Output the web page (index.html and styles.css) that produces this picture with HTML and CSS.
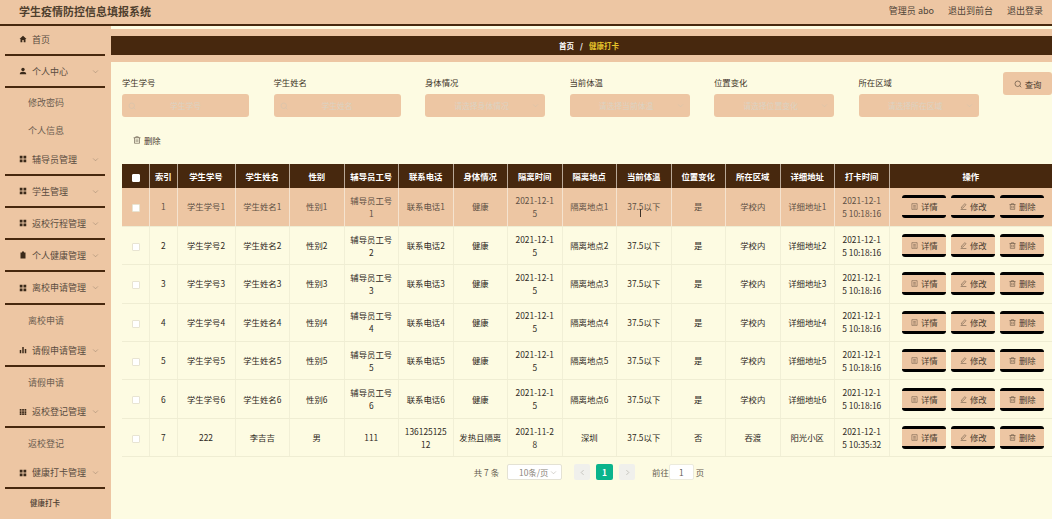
FILE: index.html
```html
<!DOCTYPE html>
<html lang="zh-CN">
<head>
<meta charset="utf-8">
<title>学生疫情防控信息填报系统</title>
<link rel="stylesheet" href="styles.css">
</head>
<body>
<svg class="defs" width="0" height="0">
  <symbol id="i-home" viewBox="0 0 16 16"><path d="M8 1.500 1 8h2v6.500h3.600V10h2.800v4.500H13V8h2z" fill="currentColor"/></symbol>
  <symbol id="i-user" viewBox="0 0 16 16"><circle cx="8" cy="5" r="3.400" fill="currentColor"/><path d="M1.500 14.500c0-3.600 2.800-5 6.500-5s6.500 1.400 6.500 5z" fill="currentColor"/></symbol>
  <symbol id="i-grid" viewBox="0 0 16 16"><path d="M1.500 1.500h5.500v5.500H1.500zM9 1.500h5.500v5.500H9zM1.500 9h5.500v5.500H1.500zM9 9h5.500v5.500H9z" fill="currentColor"/></symbol>
  <symbol id="i-grid9" viewBox="0 0 16 16"><path d="M1.500 2h3.500v3.500H1.500zM6.300 2h3.500v3.500H6.300zM11 2h3.500v3.500H11zM1.500 6.300h3.500v3.500H1.500zM6.300 6.300h3.500v3.500H6.300zM11 6.300h3.500v3.500H11zM1.500 10.600h3.500v3.500H1.500zM6.300 10.600h3.500v3.500H6.300zM11 10.600h3.500v3.500H11z" fill="currentColor"/></symbol>
  <symbol id="i-bars" viewBox="0 0 16 16"><path d="M1.500 8h3v6.500h-3zM6.500 2h3v12.500h-3zM11.500 6h3v8.500h-3z" fill="currentColor"/></symbol>
  <symbol id="i-health" viewBox="0 0 16 16"><path d="M6 1h4v2h3v12H3V3h3z" fill="currentColor"/></symbol>
  <symbol id="i-doc" viewBox="0 0 16 16"><path d="M2 1.500h12v13H2zM5 5.500h6M5 8.500h6M5 11.500h6" fill="none" stroke="currentColor" stroke-width="1"/></symbol>
  <symbol id="i-search" viewBox="0 0 16 16"><circle cx="7.500" cy="7.500" r="5.500" fill="none" stroke="currentColor" stroke-width="1.200"/><path d="m11.500 11.500 3 3" stroke="currentColor" stroke-width="1.200"/></symbol>
  <symbol id="i-down" viewBox="0 0 16 16"><path d="m2.500 5.500 5.500 5.500 5.500-5.500" fill="none" stroke="currentColor" stroke-width="1.300"/></symbol>
  <symbol id="i-trash" viewBox="0 0 16 16"><path d="M1 3.500h14M5.500 3.500v-2h5v2M3 3.500v11h10v-11M6.300 6.500v5.500M9.700 6.500v5.500" fill="none" stroke="currentColor" stroke-width="1.100"/></symbol>
  <symbol id="i-edit" viewBox="0 0 16 16"><path d="M11 1.500 13.500 4 6 12H3.500v-2.500zM1.500 15h13" fill="none" stroke="currentColor" stroke-width="1.100"/></symbol>
  <symbol id="i-left" viewBox="0 0 16 16"><path d="m10.500 2.500-5.500 5.500 5.500 5.500" fill="none" stroke="currentColor" stroke-width="1.500"/></symbol>
  <symbol id="i-right" viewBox="0 0 16 16"><path d="m5.500 2.500 5.500 5.500-5.500 5.500" fill="none" stroke="currentColor" stroke-width="1.500"/></symbol>
</svg>

<header class="topbar">
  <h1 class="brand">学生疫情防控信息填报系统</h1>
  <nav class="top-links">
    <span>管理员 abo</span>
    <span>退出到前台</span>
    <span>退出登录</span>
  </nav>
</header>

<div class="shell">
  <aside class="sidebar">
    <div class="menu-item menu-first"><svg class="mi"><use href="#i-home"/></svg><span class="mt">首页</span></div>
    <div class="menu-item"><svg class="mi"><use href="#i-user"/></svg><span class="mt">个人中心</span><svg class="chev"><use href="#i-down"/></svg></div>
    <div class="sub-item sub-short">修改密码</div>
    <div class="sub-item sub-short">个人信息</div>
    <div class="menu-item"><svg class="mi"><use href="#i-grid"/></svg><span class="mt">辅导员管理</span><svg class="chev"><use href="#i-down"/></svg></div>
    <div class="menu-item"><svg class="mi"><use href="#i-grid"/></svg><span class="mt">学生管理</span><svg class="chev"><use href="#i-down"/></svg></div>
    <div class="menu-item"><svg class="mi"><use href="#i-grid"/></svg><span class="mt">返校行程管理</span><svg class="chev"><use href="#i-down"/></svg></div>
    <div class="menu-item"><svg class="mi"><use href="#i-health"/></svg><span class="mt">个人健康管理</span><svg class="chev"><use href="#i-down"/></svg></div>
    <div class="menu-item menu-tall"><svg class="mi"><use href="#i-grid"/></svg><span class="mt">离校申请管理</span><svg class="chev"><use href="#i-down"/></svg></div>
    <div class="sub-item">离校申请</div>
    <div class="menu-item"><svg class="mi"><use href="#i-bars"/></svg><span class="mt">请假申请管理</span><svg class="chev"><use href="#i-down"/></svg></div>
    <div class="sub-item">请假申请</div>
    <div class="menu-item menu-short"><svg class="mi"><use href="#i-grid9"/></svg><span class="mt">返校登记管理</span><svg class="chev"><use href="#i-down"/></svg></div>
    <div class="sub-item">返校登记</div>
    <div class="menu-item menu-short"><svg class="mi"><use href="#i-grid"/></svg><span class="mt">健康打卡管理</span><svg class="chev"><use href="#i-down"/></svg></div>
    <div class="sub-item sub-active">健康打卡</div>
  </aside>

  <main class="content">
    <div class="crumb-band">
      <div class="crumbs"><span>首页</span><span class="crumb-sep">/</span><span class="crumb-now">健康打卡</span></div>
    </div>

    <form class="filters">
      <div class="field field-wide">
        <label class="field-label">学生学号</label>
        <div class="control"><svg class="ctl-search"><use href="#i-search"/></svg><span class="ph ph-input">学生学号</span></div>
      </div>
      <div class="field field-wide">
        <label class="field-label">学生姓名</label>
        <div class="control"><svg class="ctl-search"><use href="#i-search"/></svg><span class="ph ph-input">学生姓名</span></div>
      </div>
      <div class="field field-sel">
        <label class="field-label">身体情况</label>
        <div class="control"><span class="ph">请选择身体情况</span><svg class="ctl-down"><use href="#i-down"/></svg></div>
      </div>
      <div class="field field-sel">
        <label class="field-label">当前体温</label>
        <div class="control"><span class="ph">请选择当前体温</span><svg class="ctl-down"><use href="#i-down"/></svg></div>
      </div>
      <div class="field field-sel">
        <label class="field-label">位置变化</label>
        <div class="control"><span class="ph">请选择位置变化</span><svg class="ctl-down"><use href="#i-down"/></svg></div>
      </div>
      <div class="field field-sel">
        <label class="field-label">所在区域</label>
        <div class="control"><span class="ph">请选择所在区域</span><svg class="ctl-down"><use href="#i-down"/></svg></div>
      </div>
      <button type="button" class="query-btn"><svg class="btn-ic"><use href="#i-search"/></svg>查询</button>
    </form>

    <div class="toolbar">
      <button type="button" class="del-btn"><svg class="btn-ic"><use href="#i-trash"/></svg>删除</button>
    </div>

    <table class="grid">
      <colgroup>
        <col class="c-check"><col class="c-index"><col class="c-id"><col class="c-std"><col class="c-std"><col class="c-std"><col class="c-std"><col class="c-std"><col class="c-std"><col class="c-std"><col class="c-std"><col class="c-std"><col class="c-std"><col class="c-std"><col class="c-std"><col class="c-ops">
      </colgroup>
      <thead>
        <tr>
          <th><span class="check check-head"></span></th><th>索引</th><th>学生学号</th><th>学生姓名</th><th>性别</th><th>辅导员工号</th><th>联系电话</th><th>身体情况</th><th>隔离时间</th><th>隔离地点</th><th>当前体温</th><th>位置变化</th><th>所在区域</th><th>详细地址</th><th>打卡时间</th><th>操作</th>
        </tr>
      </thead>
      <tbody>
        <tr class="row-hover">
          <td><span class="check"></span></td><td>1</td><td>学生学号1</td><td>学生姓名1</td><td>性别1</td><td>辅导员工号1</td><td>联系电话1</td><td>健康</td><td>2021-12-15</td><td>隔离地点1</td><td class="cursor-cell">37.5以下<span class="ibeam"></span></td><td>是</td><td>学校内</td><td>详细地址1</td><td>2021-12-15 10:18:16</td>
          <td><div class="ops"><button type="button" class="op"><svg class="op-ic"><use href="#i-doc"/></svg>详情</button><button type="button" class="op"><svg class="op-ic"><use href="#i-edit"/></svg>修改</button><button type="button" class="op"><svg class="op-ic"><use href="#i-trash"/></svg>删除</button></div></td>
        </tr>
        <tr>
          <td><span class="check"></span></td><td>2</td><td>学生学号2</td><td>学生姓名2</td><td>性别2</td><td>辅导员工号2</td><td>联系电话2</td><td>健康</td><td>2021-12-15</td><td>隔离地点2</td><td>37.5以下</td><td>是</td><td>学校内</td><td>详细地址2</td><td>2021-12-15 10:18:16</td>
          <td><div class="ops"><button type="button" class="op"><svg class="op-ic"><use href="#i-doc"/></svg>详情</button><button type="button" class="op"><svg class="op-ic"><use href="#i-edit"/></svg>修改</button><button type="button" class="op"><svg class="op-ic"><use href="#i-trash"/></svg>删除</button></div></td>
        </tr>
        <tr>
          <td><span class="check"></span></td><td>3</td><td>学生学号3</td><td>学生姓名3</td><td>性别3</td><td>辅导员工号3</td><td>联系电话3</td><td>健康</td><td>2021-12-15</td><td>隔离地点3</td><td>37.5以下</td><td>是</td><td>学校内</td><td>详细地址3</td><td>2021-12-15 10:18:16</td>
          <td><div class="ops"><button type="button" class="op"><svg class="op-ic"><use href="#i-doc"/></svg>详情</button><button type="button" class="op"><svg class="op-ic"><use href="#i-edit"/></svg>修改</button><button type="button" class="op"><svg class="op-ic"><use href="#i-trash"/></svg>删除</button></div></td>
        </tr>
        <tr>
          <td><span class="check"></span></td><td>4</td><td>学生学号4</td><td>学生姓名4</td><td>性别4</td><td>辅导员工号4</td><td>联系电话4</td><td>健康</td><td>2021-12-15</td><td>隔离地点4</td><td>37.5以下</td><td>是</td><td>学校内</td><td>详细地址4</td><td>2021-12-15 10:18:16</td>
          <td><div class="ops"><button type="button" class="op"><svg class="op-ic"><use href="#i-doc"/></svg>详情</button><button type="button" class="op"><svg class="op-ic"><use href="#i-edit"/></svg>修改</button><button type="button" class="op"><svg class="op-ic"><use href="#i-trash"/></svg>删除</button></div></td>
        </tr>
        <tr>
          <td><span class="check"></span></td><td>5</td><td>学生学号5</td><td>学生姓名5</td><td>性别5</td><td>辅导员工号5</td><td>联系电话5</td><td>健康</td><td>2021-12-15</td><td>隔离地点5</td><td>37.5以下</td><td>是</td><td>学校内</td><td>详细地址5</td><td>2021-12-15 10:18:16</td>
          <td><div class="ops"><button type="button" class="op"><svg class="op-ic"><use href="#i-doc"/></svg>详情</button><button type="button" class="op"><svg class="op-ic"><use href="#i-edit"/></svg>修改</button><button type="button" class="op"><svg class="op-ic"><use href="#i-trash"/></svg>删除</button></div></td>
        </tr>
        <tr>
          <td><span class="check"></span></td><td>6</td><td>学生学号6</td><td>学生姓名6</td><td>性别6</td><td>辅导员工号6</td><td>联系电话6</td><td>健康</td><td>2021-12-15</td><td>隔离地点6</td><td>37.5以下</td><td>是</td><td>学校内</td><td>详细地址6</td><td>2021-12-15 10:18:16</td>
          <td><div class="ops"><button type="button" class="op"><svg class="op-ic"><use href="#i-doc"/></svg>详情</button><button type="button" class="op"><svg class="op-ic"><use href="#i-edit"/></svg>修改</button><button type="button" class="op"><svg class="op-ic"><use href="#i-trash"/></svg>删除</button></div></td>
        </tr>
        <tr>
          <td><span class="check"></span></td><td>7</td><td>222</td><td>李吉吉</td><td>男</td><td>111</td><td>13612512512</td><td>发热且隔离</td><td>2021-11-28</td><td>深圳</td><td>37.5以下</td><td>否</td><td>吞渡</td><td>阳光小区</td><td>2021-12-15 10:35:32</td>
          <td><div class="ops"><button type="button" class="op"><svg class="op-ic"><use href="#i-doc"/></svg>详情</button><button type="button" class="op"><svg class="op-ic"><use href="#i-edit"/></svg>修改</button><button type="button" class="op"><svg class="op-ic"><use href="#i-trash"/></svg>删除</button></div></td>
        </tr>
      </tbody>
    </table>

    <div class="pager">
      <span class="pg-total">共 7 条</span>
      <span class="pg-size">10条/页<svg class="pg-down"><use href="#i-down"/></svg></span>
      <span class="pg-btn"><svg class="pg-arrow"><use href="#i-left"/></svg></span>
      <span class="pg-btn pg-on">1</span>
      <span class="pg-btn"><svg class="pg-arrow"><use href="#i-right"/></svg></span>
      <span class="pg-goto">前往</span>
      <span class="pg-input">1</span>
      <span class="pg-unit">页</span>
    </div>
  </main>
</div>
</body>
</html>
```

FILE: styles.css
```css
* { box-sizing: border-box; }
html, body { margin: 0; height: 519px; overflow: hidden; }
body {
  background: #fdfbe2;
  color: #4a4038;
  font-family: "Noto Sans CJK SC", "Noto Sans", sans-serif;
  font-size: 8.4px;
}
.defs { display: block; height: 0; }

.topbar {
  height: 26px;
  background: #edc6a3;
  border-bottom: 2px solid #47280e;
  display: flex;
  align-items: center;
  justify-content: space-between;
  padding: 0 9px 3px 19px;
}
.brand { margin: 0; font-size: 11px; font-weight: 700; color: #4f3f2e; line-height: 16px; }
.top-links { display: flex; gap: 14px; font-size: 9px; color: #4f4438; }

.shell { display: flex; height: 493px; }

.sidebar { width: 111px; flex: none; background: #edc6a3; padding: 0 6px 0 5px; color: #5a4c40; overflow: hidden; }
.menu-item {
  height: 32px;
  border-bottom: 2px solid #47280e;
  display: flex;
  align-items: center;
  padding: 0 6px 0 14px;
  font-size: 9px;
}
.menu-first { height: 30px; padding-bottom: 2px; }
.menu-tall { height: 33px; }
.menu-short { height: 31px; }
.mi { width: 8px; height: 8px; flex: none; color: #3b2a1a; margin-right: 5px; }
.mt { flex: 1; white-space: nowrap; }
.chev { width: 7px; height: 7px; flex: none; color: #9c8670; }
.sub-item { height: 30px; display: flex; align-items: center; padding-left: 23px; font-size: 9px; color: #6c5d50; }
.sub-short { height: 28px; }
.sub-active { height: 27px; font-size: 7.5px; font-weight: 500; padding-left: 25px; color: #4a3c30; }

.content { flex: 1; min-width: 0; padding-top: 3px; }

.crumb-band { background: #edc6a3; padding: 7px 0; }
.crumbs {
  height: 19px;
  background: #47280e;
  color: #fff;
  font-size: 7.5px;
  font-weight: 700;
  display: flex;
  align-items: center;
  justify-content: center;
  padding-left: 15px;
}
.crumb-sep { margin: 0 6px; }
.crumb-now { color: #e6c32a; }

.filters { display: flex; gap: 24.5px; padding: 10px 0 0 11px; }
.field-wide { width: 127px; flex: none; }
.field-sel { width: 120px; flex: none; }
.field-label { display: block; height: 22px; line-height: 20px; font-size: 8.4px; color: #3e3428; }
.control {
  height: 23px;
  background: #edc6a3;
  border-radius: 3px;
  display: flex;
  align-items: center;
  padding: 0 6px;
  color: #d3c2ac;
}
.ph { flex: 1; text-align: center; font-size: 7.8px; color: #dcd2c2; }
.ph-input { padding-right: 8px; }
.ctl-search { width: 8px; height: 8px; flex: none; }
.ctl-down { width: 7px; height: 7px; flex: none; }
.query-btn {
  width: 49px;
  height: 23px;
  flex: none;
  border: 0;
  border-radius: 3px;
  background: #edc6a3;
  color: #4a3c30;
  font: inherit;
  display: flex;
  align-items: center;
  justify-content: center;
  padding: 0;
}
.btn-ic { width: 8px; height: 8px; margin-right: 3px; flex: none; }

.toolbar { padding: 13px 0 15px 22px; height: 47px; }
.del-btn {
  border: 0;
  background: none;
  color: #4a3c30;
  font: inherit;
  height: 19px;
  padding: 0;
  display: flex;
  align-items: center;
}

.grid { width: 930px; margin-left: 11px; border-collapse: collapse; table-layout: fixed; }
.c-check { width: 27.5px; }
.c-index { width: 27.5px; }
.c-id { width: 58px; }
.c-std { width: 54.5px; }
.c-ops { width: 163px; }
.grid th {
  height: 24px;
  background: #47280e;
  color: #fff;
  font-size: 8.4px;
  font-weight: 700;
  padding: 0 2px;
  text-align: center;
  border-right: 1px solid #b9a897;
}
.grid th:last-child, .grid td:last-child { border-right: 0; }
.grid td {
  height: 38.4px;
  padding: 0 5.5px;
  text-align: center;
  line-height: 13px;
  word-break: break-all;
  color: #2e2822;
  border-right: 1px solid #f1efd6;
  border-bottom: 1px solid #efedd3;
}
.grid td:first-child { padding: 0; }
.row-hover td { background: #edc6a3; border-right-color: #f5e3cf; color: #5d5044; }

.check {
  display: inline-block;
  width: 8px;
  height: 8px;
  background: #fff;
  border: 1px solid #e8e4d2;
  border-radius: 1px;
  vertical-align: middle;
}
.check-head { border-color: #fff; }

.cursor-cell { position: relative; }
.ibeam {
  position: absolute;
  left: 23px;
  top: 21px;
  width: 1px;
  height: 8px;
  background: #3a3028;
}

.ops { display: flex; gap: 5px; justify-content: center; padding-left: 5px; }
.op {
  width: 44px;
  height: 23px;
  padding: 0;
  flex: none;
  background: #edc6a3;
  color: #4a3c30;
  border: 0;
  border-top: 3px solid #000;
  border-bottom: 3px solid #000;
  border-radius: 3px;
  font: inherit;
  display: flex;
  align-items: center;
  justify-content: center;
}
.op-ic { width: 7px; height: 7px; margin-right: 3px; flex: none; }

.pager {
  display: flex;
  align-items: center;
  justify-content: center;
  height: 16px;
  margin-top: 7px;
  padding-left: 15px;
  color: #655c50;
}
.pg-total { margin-right: 8px; }
.pg-size {
  width: 55px;
  height: 16px;
  background: #fff;
  border: 1px solid #e4e2d4;
  border-radius: 2px;
  display: flex;
  align-items: center;
  justify-content: space-between;
  padding: 0 4px 0 11px;
  margin-right: 12px;
  color: #8a8478;
}
.pg-down { width: 7px; height: 7px; color: #b5b1a6; }
.pg-btn {
  width: 16px;
  height: 16px;
  background: #f0f0ec;
  border-radius: 2px;
  display: flex;
  align-items: center;
  justify-content: center;
  margin-right: 6px;
  color: #b0aea6;
}
.pg-on { width: 17px; background: #0bb48c; color: #fff; font-weight: 700; }
.pg-arrow { width: 7px; height: 7px; }
.pg-goto { margin-left: 11px; margin-right: 0; }
.pg-input {
  width: 25px;
  height: 16px;
  background: #fff;
  border: 1px solid #ecebdc;
  border-radius: 2px;
  display: flex;
  align-items: center;
  justify-content: center;
}
.pg-unit { margin-left: 2px; }
```
